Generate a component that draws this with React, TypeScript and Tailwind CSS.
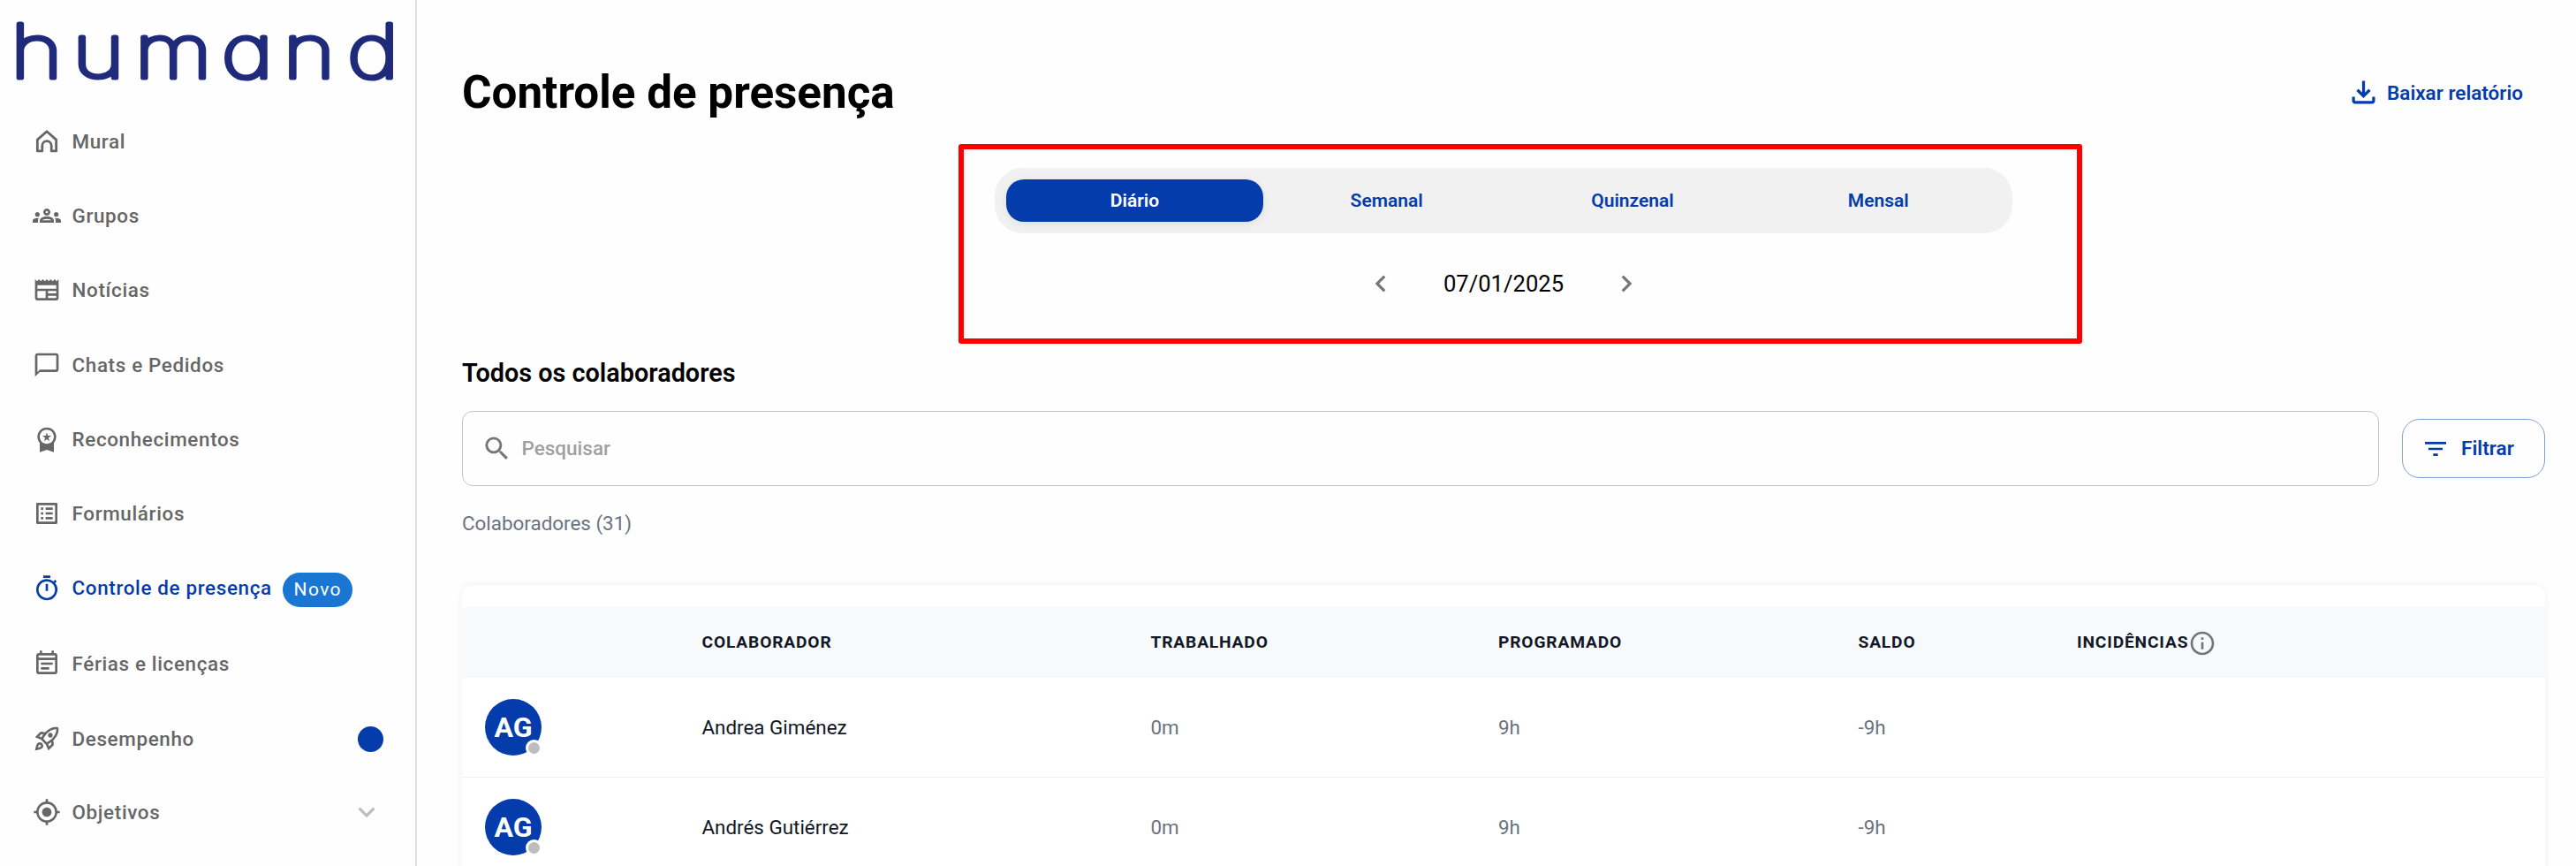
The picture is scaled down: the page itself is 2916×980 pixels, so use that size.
import React from "react";
import {
  MdOutlineGroups,
  MdOutlineNewspaper,
  MdChatBubbleOutline,
  MdWorkspacePremium,
  MdOutlineListAlt,
  MdOutlineTimer,
  MdOutlineEventNote,
  MdOutlineRocketLaunch,
  MdMyLocation,
  MdKeyboardArrowDown,
  MdChevronLeft,
  MdChevronRight,
  MdSearch,
  MdFilterList,
  MdInfoOutline,
} from "react-icons/md";

function HomeIcon({ className }: { className?: string }) {
  return (
    <svg viewBox="0 0 24 24" className={className} fill="none" stroke="currentColor" strokeWidth="2.1" strokeLinejoin="round">
      <path d="M4 20.2H8.1V15.6a3.9 3.9 0 0 1 7.8 0V20.2H20V10.6L12 3.6L4 10.6Z" />
    </svg>
  );
}

function DownloadIcon({ className }: { className?: string }) {
  return (
    <svg viewBox="0 0 24 24" className={className} fill="currentColor">
      <path d="M12 16L7 11L8.4 9.55L11 12.15V4H13V12.15L15.6 9.55L17 11L12 16ZM6 20C5.45 20 4.98 19.8 4.59 19.41C4.2 19.02 4 18.55 4 18V15H6V18H18V15H20V18C20 18.55 19.8 19.02 19.41 19.41C19.02 19.8 18.55 20 18 20H6Z" />
    </svg>
  );
}

function Logo() {
  return (
    <svg width="470" height="118" viewBox="0 0 470 118" className="block shrink-0">
      <text
        x="10 68.3 127.1 209 267.1 327.4"
        y="88"
        transform="scale(1.2 1)"
        fontSize="84"
        fontWeight="100"
        fill="#1f2a7a"
        stroke="#1f2a7a"
        strokeWidth="5.2"
        strokeLinejoin="round"
        strokeLinecap="round"
        className="font-['Inter',sans-serif] [font-feature-settings:'cv11']"
      >
        humand
      </text>
    </svg>
  );
}

type NavItem = {
  label: string;
  icon: React.ComponentType<{ className?: string }>;
  height: string;
  active?: boolean;
  chip?: string;
  dot?: boolean;
  expandable?: boolean;
};

const navItems: NavItem[] = [
  { label: "Mural", icon: HomeIcon, height: "h-[84px]" },
  { label: "Grupos", icon: MdOutlineGroups, height: "h-[84px]" },
  { label: "Notícias", icon: MdOutlineNewspaper, height: "h-[84px]" },
  { label: "Chats e Pedidos", icon: MdChatBubbleOutline, height: "h-[86px]" },
  { label: "Reconhecimentos", icon: MdWorkspacePremium, height: "h-[82px]" },
  { label: "Formulários", icon: MdOutlineListAlt, height: "h-[86px]" },
  { label: "Controle de presença", icon: MdOutlineTimer, height: "h-[83px]", active: true, chip: "Novo" },
  { label: "Férias e licenças", icon: MdOutlineEventNote, height: "h-[88px]" },
  { label: "Desempenho", icon: MdOutlineRocketLaunch, height: "h-[82px]", dot: true },
  { label: "Objetivos", icon: MdMyLocation, height: "h-[84px]", expandable: true },
];

function Sidebar() {
  return (
    <aside className="flex h-full w-[472px] shrink-0 flex-col border-r-2 border-[#e0e0e0]">
      <Logo />
      <nav>
        {navItems.map(({ label, icon: Icon, height, active, chip, dot, expandable }) => (
          <a
            key={label}
            className={`flex items-center pr-9 pl-[37px] text-[22.4px] font-medium tracking-[0.66px] ${height} ${
              active ? "text-[#053cac]" : "text-[#666666]"
            }`}
          >
            <Icon className="size-8 shrink-0" />
            <span className={active ? "ml-[12.5px]" : "ml-[12.5px] pt-0.5"}>{label}</span>
            {chip && (
              <span className="mt-[3px] ml-3 flex h-[39px] w-[79px] items-center justify-center rounded-full bg-[#1976d2] pt-px pl-px text-[21px] font-normal tracking-[1.4px] text-white">
                {chip}
              </span>
            )}
            {dot && <span className="ml-auto size-[29px] rounded-full bg-[#053cac]" />}
            {expandable && <MdKeyboardArrowDown className="ml-auto size-[38px] text-[#bdbdbd]" />}
          </a>
        ))}
      </nav>
    </aside>
  );
}

const periods = ["Semanal", "Quinzenal", "Mensal"];

function PeriodPicker() {
  return (
    <section className="relative mt-[54px] flex shrink-0 flex-col items-center">
      <div className="flex h-[74px] w-[1152px] items-center rounded-[32px] bg-[#f1f1f1] px-[13px] text-[21px] text-[#053cac]">
        <button className="h-12 w-[291px] rounded-[20px] bg-[#053cac] pt-px font-semibold text-white shadow-[0_2px_10px_rgba(0,0,0,0.08)]">
          Diário
        </button>
        {periods.map((p) => (
          <button key={p} className="h-12 flex-1 pt-px pl-px font-semibold">
            {p}
          </button>
        ))}
      </div>
      <div className="mt-[25px] flex h-16 items-center text-[25.6px] text-black">
        <MdChevronLeft className="size-[38px] text-[#757575]" />
        <span className="w-[240px] pt-px text-center">07/01/2025</span>
        <MdChevronRight className="size-[38px] text-[#757575]" />
      </div>
      <div className="absolute top-[-27px] left-[562px] h-[226px] w-[1272px] rounded-[3px] border-6 border-[#ff0000]" />
    </section>
  );
}

const columns = "grid grid-cols-[245.5px_508px_393.5px_407.5px_247.5px_1fr] items-center pl-[26px]";
const people = ["Andrea Giménez", "Andrés Gutiérrez"];

function PeopleTable() {
  return (
    <section className="mt-[55px] h-[400px] shrink-0 rounded-xl bg-white pt-[25px] shadow-[0_0_8px_rgba(0,0,0,0.06)]">
      <div className={`${columns} h-20 bg-[#f8f9fb] pt-px text-[19.2px] font-bold tracking-[0.83px] text-[#111827]`}>
        <span />
        <span>COLABORADOR</span>
        <span>TRABALHADO</span>
        <span>PROGRAMADO</span>
        <span>SALDO</span>
        <span className="flex items-center">
          INCIDÊNCIAS
          <MdInfoOutline className="size-8 text-[#757575]" />
        </span>
      </div>
      {people.map((name) => (
        <div key={name} className={`${columns} h-[113px] border-b border-[#f0f1f3] text-[22.4px] text-[#6b7280]`}>
          <div className="relative flex size-16 items-center justify-center rounded-full bg-[#053cac] text-[32px] font-bold text-white">
            AG
            <span className="absolute right-0.5 bottom-[2px] size-[13px] rounded-full bg-[#bdbdbd] ring-3 ring-white" />
          </div>
          <span className="pt-0.5 text-[#111827]">{name}</span>
          <span className="pt-0.5">0m</span>
          <span className="pt-0.5">9h</span>
          <span className="pt-0.5">-9h</span>
        </div>
      ))}
    </section>
  );
}

export default function App() {
  return (
    <div className="flex h-[980px] w-[2916px] overflow-hidden bg-[#fefefe] font-['Roboto',sans-serif]">
      <Sidebar />
      <main className="flex min-w-0 flex-1 flex-col pr-[35px] pl-[51px]">
        <header className="mt-[72px] flex h-16 shrink-0 items-center justify-between">
          <h1 className="pt-[3px] text-[51.2px] font-bold text-black">Controle de presença</h1>
          <button className="flex items-center gap-[7px] pr-[25px] text-[22.5px] font-semibold text-[#053cac]">
            <DownloadIcon className="size-[39px]" />
            <span className="pt-[3px]">Baixar relatório</span>
          </button>
        </header>
        <PeriodPicker />
        <h2 className="mt-[49px] flex h-10 shrink-0 items-center pt-0.5 text-[28.8px] font-semibold text-black">
          Todos os colaboradores
        </h2>
        <div className="mt-[23px] flex h-[85px] shrink-0 items-center gap-[26px]">
          <div className="flex h-full flex-1 items-center gap-[10.5px] rounded-xl border border-[#c4c4c4] pl-[21px] text-[22.5px] font-medium text-[#a0a0a0]">
            <MdSearch className="size-[35px] text-[#757575]" />
            Pesquisar
          </div>
          <button className="flex h-[67px] w-[162px] items-center gap-[13px] rounded-[20px] border border-[#829dd8] pl-[21px] text-[22.6px] font-semibold text-[#053cac]">
            <MdFilterList className="size-8" />
            Filtrar
          </button>
        </div>
        <p className="mt-[27px] flex h-[30px] shrink-0 items-center pt-0.5 text-[22.4px] text-[#6b7280]">Colaboradores (31)</p>
        <PeopleTable />
      </main>
    </div>
  );
}
